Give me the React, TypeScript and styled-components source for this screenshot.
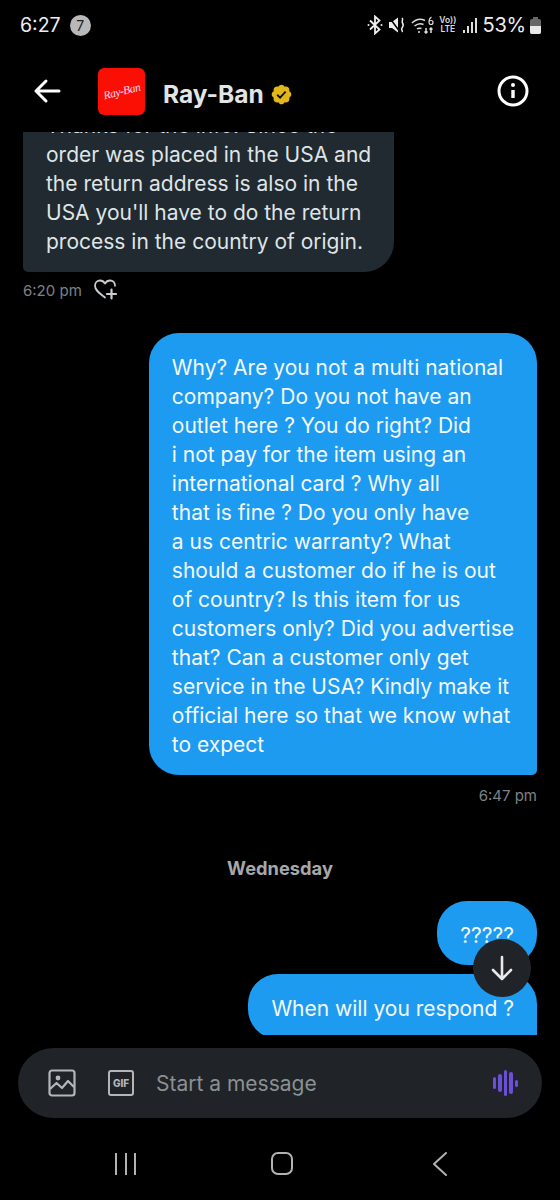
import React from "react";
import styled, { createGlobalStyle } from "styled-components";

const incomingLines = [
  "Thanks for the info. Since the",
  "order was placed in the USA and",
  "the return address is also in the",
  "USA you'll have to do the return",
  "process in the country of origin.",
];

const outgoingLines = [
  "Why? Are you not a multi national",
  "company? Do you not have an",
  "outlet here ? You do right? Did",
  "i not pay for the item using an",
  "international card ? Why all",
  "that is fine ? Do you only have",
  "a us centric warranty? What",
  "should a customer do if he is out",
  "of country? Is this item for us",
  "customers only? Did you advertise",
  "that? Can a customer only get",
  "service in the USA? Kindly make it",
  "official here so that we know what",
  "to expect",
];

export default function App() {
  return (
    <Screen>
      <GlobalStyle />
      <StatusBar>
        <Clock>6:27</Clock>
        <NotifBadge>7</NotifBadge>
        <StatusIcons>
          <svg width="16" height="20" viewBox="0 0 16 20" fill="none" stroke="#eee" strokeWidth="1.8">
            <path d="M3 5.5l9.5 9-4.5 4V1.500l4.500 4-9.500 9" />
            <circle cx="1.500" cy="10" r="1" fill="#eee" stroke="none" />
            <circle cx="14.500" cy="10" r="1" fill="#eee" stroke="none" />
          </svg>
          <svg width="18" height="18" viewBox="0 0 18 18" fill="none">
            <path d="M1 6h3l6-4.500v15L4 12H1z" fill="#eee" />
            <path d="M1 1l11 15" stroke="#000" strokeWidth="1.500" />
            <path d="M14 2c2 2-1 3 .5 5s1 3-.5 5 1.500 3 0 4" stroke="#eee" strokeWidth="1.500" />
          </svg>
          <svg width="23" height="18" viewBox="0 0 23 18" fill="none" stroke="#ddd" strokeWidth="1.500">
            <path d="M1 7c4-4 9-4.500 13-2.500M3.500 10c3-2.500 6-3 9-1.500M6 13c1.500-1 3-1 4.500-.5" />
            <circle cx="8" cy="16" r="1" fill="#ddd" stroke="none" />
            <path d="M15 12v5M13.500 15.500l1.500 1.500 1.500-1.500M20 17v-5M18.500 13.500l1.500-1.500 1.500 1.500" />
            <path d="M20.500 1c-2 1-2.500 3-2.500 5s1 2.500 2 2.500 2-.8 2-2-1-2-2-2-2 .5-2 1.500" strokeWidth="1.200" />
          </svg>
          <VoLte>
            <span>Vo))</span>
            <span>LTE</span>
          </VoLte>
          <SignalBars>
            <SignalBar $h={3} />
            <SignalBar $h={7} />
            <SignalBar $h={11} />
            <SignalBar $h={15} />
          </SignalBars>
          <BatteryText>53%</BatteryText>
          <Battery>
            <BatteryLevel />
          </Battery>
        </StatusIcons>
      </StatusBar>

      <Header>
        <IconButton aria-label="back">
          <svg width="28" height="26" viewBox="0 0 28 26" fill="none" stroke="#fff" strokeWidth="3" strokeLinecap="round" strokeLinejoin="round">
            <path d="M26 13H3M13 3L3 13l10 10" />
          </svg>
        </IconButton>
        <Logo>
          <LogoText>Ray-Ban</LogoText>
        </Logo>
        <TitleRow>
          <Title>Ray-Ban</Title>
          <svg width="23" height="23" viewBox="0 0 24 24">
            <path
              fill="#e2b719"
              d="M22.25 12c0-1.430-.88-2.670-2.190-3.340.46-1.390.2-2.900-.81-3.910s-2.520-1.270-3.910-.81c-.66-1.310-1.910-2.190-3.340-2.190s-2.670.88-3.330 2.190c-1.400-.46-2.910-.2-3.920.81s-1.260 2.520-.8 3.910c-1.310.67-2.200 1.910-2.200 3.340s.89 2.670 2.200 3.340c-.46 1.390-.21 2.900.8 3.910s2.520 1.260 3.910.81c.67 1.310 1.910 2.190 3.340 2.190s2.680-.88 3.340-2.190c1.390.45 2.900.2 3.910-.81s1.270-2.520.81-3.910c1.310-.67 2.190-1.910 2.190-3.340z"
            />
            <path d="M7.500 12.300l3 3 5.800-6.300" fill="none" stroke="#111" strokeWidth="2" />
          </svg>
        </TitleRow>
        <InfoButton aria-label="info">
          <svg width="32" height="32" viewBox="0 0 32 32" fill="none" stroke="#fff" strokeWidth="3">
            <circle cx="16" cy="16" r="14" />
            <path d="M16 15v8" strokeWidth="3.400" />
            <circle cx="16" cy="10" r="2" fill="#fff" stroke="none" />
          </svg>
        </InfoButton>
      </Header>

      <Chat>
        <Bubble $incoming>
          {incomingLines.map((line) => (
            <Line key={line}>{line}</Line>
          ))}
        </Bubble>
        <MetaRow>
          <TimeText>6:20 pm</TimeText>
          <svg width="26" height="24" viewBox="0 0 26 24" fill="none" stroke="#c9cdd0" strokeWidth="1.800" strokeLinecap="round" strokeLinejoin="round">
            <path d="M12 19.500C7 15.500 2 12.500 2 7.800 2 4.500 4.500 2.500 7 2.500c2 0 3.800 1 5 3 1.200-2 3-3 5-3 2.800 0 5 2 5 5.300" />
            <path d="M18.500 11.500v9M14 16h9" strokeWidth="2.200" />
          </svg>
        </MetaRow>

        <Bubble>
          {outgoingLines.map((line) => (
            <Line key={line}>{line}</Line>
          ))}
        </Bubble>
        <MetaRow $right>
          <TimeText>6:47 pm</TimeText>
        </MetaRow>

        <DayLabel>Wednesday</DayLabel>

        <Bubble $stacked>?????</Bubble>
        <Bubble $last>When will you respond ?</Bubble>

        <ScrollDown aria-label="scroll down">
          <svg width="26" height="26" viewBox="0 0 26 26" fill="none" stroke="#e7e9ea" strokeWidth="2.600" strokeLinecap="round" strokeLinejoin="round">
            <path d="M13 2v22M4 15l9 9 9-9" />
          </svg>
        </ScrollDown>
      </Chat>

      <Composer>
        <svg width="28" height="28" viewBox="0 0 28 28" fill="none" stroke="#b4b7ba" strokeWidth="2.200" strokeLinejoin="round">
          <rect x="1.500" y="1.500" width="25" height="25" rx="2.500" />
          <path d="M2 20l6.500-6 5.500 5 6-7 6 6" />
          <circle cx="10" cy="9" r="2.400" fill="#b4b7ba" stroke="none" />
        </svg>
        <GifIcon>GIF</GifIcon>
        <Placeholder>Start a message</Placeholder>
        <VoiceWave>
          <WaveBar $h={12} />
          <WaveBar $h={18} />
          <WaveBar $h={26} />
          <WaveBar $h={22} />
          <WaveBar $h={7} />
        </VoiceWave>
      </Composer>

      <NavBar>
        <RecentsIcon>
          <span />
          <span />
          <span />
        </RecentsIcon>
        <HomeIcon />
        <svg width="16" height="26" viewBox="0 0 16 26" fill="none" stroke="#b0b2b3" strokeWidth="2" strokeLinecap="round" strokeLinejoin="round">
          <path d="M14 2L2 13l12 11" />
        </svg>
      </NavBar>
    </Screen>
  );
}

const GlobalStyle = createGlobalStyle`
  html, body {
    margin: 0;
    padding: 0;
    background: #000;
  }
`;

const Screen = styled.div`
  width: 560px;
  height: 1200px;
  background: #000;
  display: flex;
  flex-direction: column;
  overflow: hidden;
  font-family: Inter, "Liberation Sans", sans-serif;
  color: #fff;
`;

const StatusBar = styled.div`
  height: 50px;
  flex-shrink: 0;
  display: flex;
  align-items: center;
  padding: 0 19px 0 20px;
  box-sizing: border-box;
`;

const Clock = styled.div`
  font-size: 19.500px;
  color: #eee;
`;

const NotifBadge = styled.div`
  width: 21px;
  height: 21px;
  border-radius: 50%;
  margin-left: 9px;
  background: #b9b9b9;
  color: #222;
  font-size: 14px;
  display: flex;
  align-items: center;
  justify-content: center;
`;

const StatusIcons = styled.div`
  margin-left: auto;
  display: flex;
  align-items: center;
  gap: 5px;
`;

const VoLte = styled.div`
  display: flex;
  flex-direction: column;
  align-items: center;
  font-size: 8.500px;
  line-height: 9px;
  font-weight: 600;
  color: #ddd;
  margin-right: 2px;
`;

const SignalBars = styled.div`
  display: flex;
  align-items: flex-end;
  gap: 2px;
  height: 16px;
`;

const SignalBar = styled.div<{ $h: number }>`
  width: 2px;
  height: ${(p) => p.$h}px;
  background: #ddd;
`;

const BatteryText = styled.div`
  font-size: 20px;
  color: #eee;
  letter-spacing: -0.2px;
`;

const Battery = styled.div`
  width: 11px;
  height: 15px;
  margin: 2px 0 0 -1px;
  border-radius: 2px;
  background: #666;
  position: relative;

  &::before {
    content: "";
    position: absolute;
    top: -2px;
    left: 3px;
    width: 5px;
    height: 2px;
    background: #666;
  }
`;

const BatteryLevel = styled.div`
  position: absolute;
  left: 0;
  right: 0;
  bottom: 0;
  height: 53%;
  border-radius: 0 0 2px 2px;
  background: #e8e8e8;
`;

const Header = styled.div`
  height: 82px;
  flex-shrink: 0;
  display: flex;
  align-items: center;
  box-sizing: border-box;
  padding: 0 31px 0 33px;
`;

const IconButton = styled.div`
  width: 65px;
  display: flex;
  align-items: center;
`;

const Logo = styled.div`
  width: 47px;
  height: 47px;
  border-radius: 6px;
  background: #fb0f05;
  display: flex;
  align-items: center;
  justify-content: center;
`;

const LogoText = styled.div`
  font-family: "Liberation Serif", serif;
  font-style: italic;
  font-size: 11.500px;
  letter-spacing: -0.4px;
  color: #fde;
  transform: rotate(-14deg);
`;

const TitleRow = styled.div`
  display: flex;
  align-items: center;
  gap: 6px;
  margin-left: 18px;
  padding-top: 6px;
`;

const Title = styled.div`
  font-size: 24.500px;
  font-weight: 700;
  color: #e2e4e5;
`;

const InfoButton = styled.div`
  margin-left: auto;
  display: flex;
`;

const Chat = styled.div`
  flex: 1;
  min-height: 0;
  position: relative;
  display: flex;
  flex-direction: column;
  justify-content: flex-end;
  overflow: hidden;
  padding: 0 23px;
`;

const Bubble = styled.div<{ $incoming?: boolean; $stacked?: boolean; $last?: boolean }>`
  flex-shrink: 0;
  box-sizing: border-box;
  align-self: ${(p) => (p.$incoming ? "flex-start" : "flex-end")};
  padding: 20px 23px ${(p) => (p.$stacked ? "15px" : "16px")};
  font-size: 21px;
  line-height: 29px;
  border-radius: ${(p) => (p.$incoming ? "30px 30px 30px 5px" : p.$stacked ? "30px" : "30px 30px 5px 30px")};
  background: ${(p) => (p.$incoming ? "#202a30" : "#1d9bf0")};
  color: ${(p) => (p.$incoming ? "#dfe4e7" : "#f4f9fd")};
  margin-bottom: ${(p) => (p.$stacked ? "9px" : p.$last ? "-4px" : "0")};
`;

const Line = styled.div`
  white-space: nowrap;
`;

const MetaRow = styled.div<{ $right?: boolean }>`
  flex-shrink: 0;
  height: 20px;
  margin-top: ${(p) => (p.$right ? "10px" : "8px")};
  margin-bottom: ${(p) => (p.$right ? "0" : "33px")};
  display: flex;
  align-items: center;
  gap: 11px;
  justify-content: ${(p) => (p.$right ? "flex-end" : "flex-start")};
`;

const TimeText = styled.div`
  font-size: 15px;
  color: #7d8286;
`;

const DayLabel = styled.div`
  flex-shrink: 0;
  margin: 52px 0 22px;
  text-align: center;
  font-size: 18.300px;
  line-height: 22px;
  font-weight: 700;
  color: #a6a8aa;
`;

const ScrollDown = styled.div`
  position: absolute;
  right: 29px;
  bottom: 38px;
  width: 58px;
  height: 58px;
  border-radius: 50%;
  background: #202327;
  display: flex;
  align-items: center;
  justify-content: center;
`;

const Composer = styled.div`
  height: 70px;
  flex-shrink: 0;
  margin: 13px 18px 0;
  border-radius: 35px;
  background: #202327;
  display: flex;
  align-items: center;
  padding: 0 24px 0 30px;
`;

const GifIcon = styled.div`
  width: 26px;
  height: 26px;
  box-sizing: border-box;
  margin-left: 32px;
  border: 2.500px solid #b4b7ba;
  border-radius: 3px;
  color: #b4b7ba;
  font-size: 10px;
  font-weight: 800;
  display: flex;
  align-items: center;
  justify-content: center;
`;

const Placeholder = styled.div`
  margin-left: 22px;
  font-size: 21px;
  color: #8b9094;
`;

const VoiceWave = styled.div`
  margin-left: auto;
  display: flex;
  align-items: center;
  gap: 2px;
`;

const WaveBar = styled.div<{ $h: number }>`
  width: 3.500px;
  height: ${(p) => p.$h}px;
  border-radius: 2px;
  background: #6c4fd8;
`;

const NavBar = styled.div`
  height: 82px;
  flex-shrink: 0;
  box-sizing: border-box;
  display: flex;
  align-items: center;
  padding: 9px 112px 0 115px;
  justify-content: space-between;
`;

const RecentsIcon = styled.div`
  display: flex;
  gap: 7.500px;

  span {
    width: 2px;
    height: 22px;
    background: #b0b2b3;
  }
`;

const HomeIcon = styled.div`
  width: 22px;
  height: 23px;
  box-sizing: border-box;
  margin-right: 4px;
  border: 2px solid #b0b2b3;
  border-radius: 7px;
`;
